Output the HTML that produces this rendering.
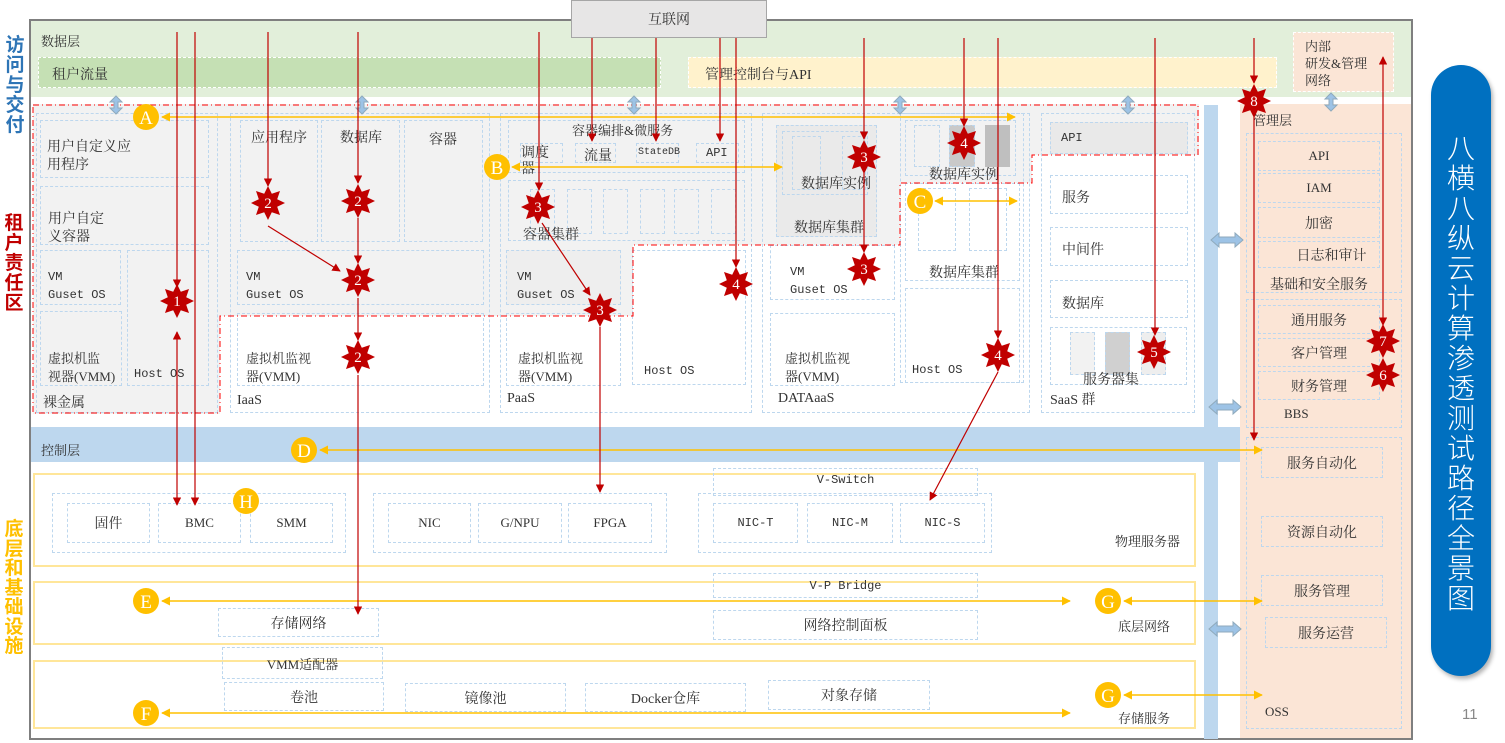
<!DOCTYPE html>
<html><head><meta charset="utf-8">
<style>
*{margin:0;padding:0;box-sizing:border-box}
body{width:1505px;height:743px;background:#fff;position:relative;overflow:hidden;font-family:"Liberation Serif","Noto Serif CJK SC",serif;color:#333;font-size:13px}
.a{position:absolute}
.b{position:absolute;border:1.5px dashed #bdd7ee}
.t{position:absolute;white-space:nowrap;font-size:13px;color:#333}
.m{font-family:"Liberation Mono","Noto Serif CJK SC",monospace;font-size:12px}
.c{display:flex;align-items:center;justify-content:center}
.side{position:absolute;font-size:19px;font-weight:bold;line-height:20px;width:22px;text-align:center;font-family:"Noto Sans CJK SC",sans-serif}
</style></head><body>
<!-- side labels -->
<div class="side" style="left:4px;top:34px;color:#2e75b6">访问与交付</div>
<div class="side" style="left:3px;top:212px;color:#c00000">租户责任区</div>
<div class="side" style="left:3px;top:518px;color:#ffc000;line-height:19.5px">底层和基础设施</div>

<!-- frame -->
<div class="a" style="left:29px;top:19px;width:1384px;height:721px;border:2px solid #7f7f7f;background:#fff"></div>
<div class="a" style="left:31px;top:21px;width:1380px;height:76px;background:#e2efda"></div>
<div class="t" style="left:41px;top:31px">数据层</div>
<div class="a" style="left:38px;top:57px;width:623px;height:31px;background:#c5e0b4;border:1.5px dashed #fff"></div>
<div class="t" style="left:52px;top:64px;font-size:14px">租户流量</div>
<div class="a" style="left:688px;top:57px;width:589px;height:31px;background:#fff2cc;border:1.5px dashed #fff"></div>
<div class="t" style="left:705px;top:64px;font-size:14px">管理控制台与API</div>
<div class="a" style="left:1293px;top:32px;width:101px;height:60px;background:#fbe5d6;border:1.5px dashed #fff"></div>
<div class="t" style="left:1305px;top:38px;line-height:17px">内部<br>研发&amp;管理<br>网络</div>
<div class="a c" style="left:571px;top:0;width:196px;height:38px;background:#e7e6e6;border:1.5px solid #a6a6a6;font-size:14px">互联网</div>

<!-- tenant region -->
<div class="a" style="left:33px;top:104px;width:1166px;height:310px;background:#f2f2f2"></div>
<div class="a" style="left:220px;top:316px;width:413px;height:98px;background:#fff"></div>
<div class="a" style="left:633px;top:245px;width:267px;height:169px;background:#fff"></div>
<div class="a" style="left:900px;top:183px;width:132px;height:231px;background:#fff"></div>
<div class="a" style="left:1032px;top:155px;width:167px;height:259px;background:#fff"></div>

<!-- 裸金属 -->
<div class="b" style="left:36px;top:113px;width:182px;height:300px"></div>
<div class="b" style="left:40px;top:120px;width:169px;height:58px"></div>
<div class="t" style="left:47px;top:139px;line-height:18px;font-size:14px">用户自定义应<br>用程序</div>
<div class="b" style="left:40px;top:186px;width:169px;height:59px"></div>
<div class="t" style="left:48px;top:211px;line-height:18px;font-size:14px">用户自定<br>义容器</div>
<div class="b" style="left:40px;top:250px;width:81px;height:55px"></div>
<div class="t m" style="left:48px;top:268px;line-height:18px">VM<br>Guset OS</div>
<div class="b" style="left:127px;top:250px;width:82px;height:136px"></div>
<div class="t m" style="left:134px;top:367px">Host OS</div>
<div class="b" style="left:40px;top:311px;width:82px;height:75px"></div>
<div class="t" style="left:48px;top:350px;line-height:18px">虚拟机监<br>视器(VMM)</div>
<div class="t" style="left:43px;top:392px;font-size:14px">裸金属</div>

<!-- IaaS -->
<div class="b" style="left:230px;top:113px;width:260px;height:300px"></div>
<div class="b" style="left:240px;top:120px;width:78px;height:122px"></div>
<div class="t" style="left:251px;top:127px;font-size:14px">应用程序</div>
<div class="b" style="left:321px;top:120px;width:79px;height:122px"></div>
<div class="t" style="left:340px;top:127px;font-size:14px">数据库</div>
<div class="b" style="left:404px;top:120px;width:79px;height:122px"></div>
<div class="t" style="left:429px;top:129px;font-size:14px">容器</div>
<div class="b" style="left:237px;top:250px;width:247px;height:55px"></div>
<div class="t m" style="left:246px;top:268px;line-height:18px">VM<br>Guset OS</div>
<div class="b" style="left:237px;top:313px;width:247px;height:73px"></div>
<div class="t" style="left:246px;top:350px;line-height:18px">虚拟机监视<br>器(VMM)</div>
<div class="t" style="left:237px;top:393px;font-size:14px">IaaS</div>

<!-- PaaS -->
<div class="b" style="left:500px;top:113px;width:252px;height:300px"></div>
<div class="b" style="left:508px;top:120px;width:237px;height:53px"></div>
<div class="t" style="left:572px;top:120px">容器编排&amp;微服务</div>
<div class="b" style="left:520px;top:143px;width:43px;height:20px"></div>
<div class="t" style="left:521px;top:146px;line-height:16px;font-size:14px">调度<br>器</div>
<div class="b" style="left:575px;top:143px;width:41px;height:20px"></div>
<div class="t" style="left:584px;top:145px;font-size:14px">流量</div>
<div class="b" style="left:636px;top:143px;width:43px;height:20px"></div>
<div class="t m" style="left:638px;top:147px;font-size:10px">StateDB</div>
<div class="b" style="left:696px;top:143px;width:43px;height:20px"></div>
<div class="t m" style="left:706px;top:146px">API</div>
<div class="b" style="left:508px;top:180px;width:237px;height:61px"></div>
<div class="b" style="left:530px;top:189px;width:25px;height:45px"></div>
<div class="b" style="left:567px;top:189px;width:25px;height:45px"></div>
<div class="b" style="left:603px;top:189px;width:25px;height:45px"></div>
<div class="b" style="left:640px;top:189px;width:25px;height:45px"></div>
<div class="b" style="left:674px;top:189px;width:25px;height:45px"></div>
<div class="b" style="left:711px;top:189px;width:25px;height:45px"></div>
<div class="t" style="left:523px;top:224px;font-size:14px">容器集群</div>
<div class="b" style="left:506px;top:250px;width:115px;height:55px;background:#eee"></div>
<div class="t m" style="left:517px;top:268px;line-height:18px">VM<br>Guset OS</div>
<div class="b" style="left:632px;top:250px;width:114px;height:135px"></div>
<div class="t m" style="left:644px;top:364px">Host OS</div>
<div class="b" style="left:506px;top:313px;width:115px;height:73px"></div>
<div class="t" style="left:518px;top:350px;line-height:18px">虚拟机监视<br>器(VMM)</div>
<div class="t" style="left:507px;top:391px;font-size:14px">PaaS</div>

<!-- DATAaaS -->
<div class="b" style="left:762px;top:113px;width:268px;height:300px"></div>
<div class="b" style="left:776px;top:125px;width:101px;height:112px;background:#eaeaea"></div>
<div class="b" style="left:782px;top:131px;width:86px;height:64px"></div>
<div class="b" style="left:792px;top:136px;width:29px;height:54px"></div>
<div class="b" style="left:842px;top:136px;width:24px;height:54px"></div>
<div class="t" style="left:801px;top:173px;font-size:14px">数据库实例</div>
<div class="t" style="left:794px;top:217px;font-size:14px">数据库集群</div>
<div class="b" style="left:770px;top:245px;width:125px;height:55px"></div>
<div class="t m" style="left:790px;top:263px;line-height:18px">VM<br>Guset OS</div>
<div class="b" style="left:770px;top:313px;width:125px;height:73px"></div>
<div class="t" style="left:785px;top:350px;line-height:18px">虚拟机监视<br>器(VMM)</div>
<div class="t" style="left:778px;top:391px;font-size:14px">DATAaaS</div>
<div class="b" style="left:900px;top:113px;width:124px;height:270px"></div>
<div class="b" style="left:905px;top:120px;width:111px;height:56px"></div>
<div class="b" style="left:914px;top:125px;width:26px;height:42px"></div>
<div class="a" style="left:949px;top:125px;width:26px;height:42px;background:#c9c9c9;border:1.5px dashed #bdd7ee"></div>
<div class="a" style="left:985px;top:125px;width:25px;height:42px;background:#bfbfbf"></div>
<div class="t" style="left:929px;top:164px;font-size:14px">数据库实例</div>
<div class="b" style="left:905px;top:183px;width:115px;height:98px"></div>
<div class="b" style="left:918px;top:188px;width:38px;height:63px"></div>
<div class="b" style="left:969px;top:188px;width:38px;height:63px"></div>
<div class="t" style="left:929px;top:262px;font-size:14px">数据库集群</div>
<div class="b" style="left:905px;top:288px;width:115px;height:95px"></div>
<div class="t m" style="left:912px;top:363px">Host OS</div>

<!-- SaaS -->
<div class="b" style="left:1041px;top:113px;width:154px;height:300px"></div>
<div class="b" style="left:1050px;top:122px;width:138px;height:32px;background:#e9e9e9"></div>
<div class="t m" style="left:1061px;top:131px">API</div>
<div class="b" style="left:1050px;top:175px;width:138px;height:39px"></div>
<div class="t" style="left:1062px;top:187px;font-size:14px">服务</div>
<div class="b" style="left:1050px;top:227px;width:138px;height:39px"></div>
<div class="t" style="left:1062px;top:239px;font-size:14px">中间件</div>
<div class="b" style="left:1050px;top:280px;width:138px;height:38px"></div>
<div class="t" style="left:1062px;top:293px;font-size:14px">数据库</div>
<div class="b" style="left:1050px;top:327px;width:137px;height:58px"></div>
<div class="b" style="left:1070px;top:332px;width:25px;height:43px;background:#f2f2f2"></div>
<div class="a" style="left:1105px;top:332px;width:25px;height:43px;background:#d0d0d0;border:1.5px dashed #bdd7ee"></div>
<div class="b" style="left:1141px;top:332px;width:25px;height:43px;background:#eee"></div>
<div class="t" style="left:1083px;top:369px;font-size:14px">服务器集</div>
<div class="t" style="left:1050px;top:389px;font-size:14px">SaaS 群</div>

<!-- blue bar and mgmt -->
<div class="a" style="left:1204px;top:105px;width:14px;height:634px;background:#bdd7ee"></div>
<div class="a" style="left:1240px;top:104px;width:171px;height:634px;background:#fbe5d6"></div>
<div class="t" style="left:1253px;top:110px">管理层</div>
<div class="b" style="left:1246px;top:133px;width:156px;height:160px"></div>
<div class="b c" style="left:1258px;top:141px;width:122px;height:30px">API</div>
<div class="b c" style="left:1258px;top:173px;width:122px;height:30px">IAM</div>
<div class="b c" style="left:1258px;top:207px;width:122px;height:31px;font-size:14px">加密</div>
<div class="b c" style="left:1258px;top:241px;width:122px;height:27px;font-size:14px;padding-left:25px">日志和审计</div>
<div class="t" style="left:1270px;top:274px;font-size:14px">基础和安全服务</div>
<div class="b" style="left:1246px;top:299px;width:156px;height:129px"></div>
<div class="b c" style="left:1258px;top:305px;width:122px;height:29px;font-size:14px">通用服务</div>
<div class="b c" style="left:1258px;top:338px;width:122px;height:29px;font-size:14px">客户管理</div>
<div class="b c" style="left:1258px;top:371px;width:122px;height:29px;font-size:14px">财务管理</div>
<div class="t" style="left:1284px;top:406px">BBS</div>
<div class="b" style="left:1246px;top:437px;width:156px;height:292px"></div>
<div class="b c" style="left:1261px;top:447px;width:122px;height:31px;font-size:14px">服务自动化</div>
<div class="b c" style="left:1261px;top:516px;width:122px;height:31px;font-size:14px">资源自动化</div>
<div class="b c" style="left:1261px;top:575px;width:122px;height:31px;font-size:14px">服务管理</div>
<div class="b c" style="left:1265px;top:617px;width:122px;height:31px;font-size:14px">服务运营</div>
<div class="t" style="left:1265px;top:704px">OSS</div>

<!-- control layer -->
<div class="a" style="left:31px;top:427px;width:1209px;height:35px;background:#bdd7ee"></div>
<div class="t" style="left:41px;top:440px">控制层</div>

<!-- physical -->
<div class="a" style="left:33px;top:473px;width:1163px;height:94px;border:2px solid #ffe699"></div>
<div class="b" style="left:52px;top:493px;width:294px;height:60px"></div>
<div class="b c" style="left:67px;top:503px;width:83px;height:40px;font-size:14px">固件</div>
<div class="b c" style="left:158px;top:503px;width:83px;height:40px">BMC</div>
<div class="b c" style="left:250px;top:503px;width:83px;height:40px">SMM</div>
<div class="b" style="left:373px;top:493px;width:294px;height:60px"></div>
<div class="b c" style="left:388px;top:503px;width:83px;height:40px">NIC</div>
<div class="b c" style="left:478px;top:503px;width:84px;height:40px">G/NPU</div>
<div class="b c" style="left:568px;top:503px;width:84px;height:40px">FPGA</div>
<div class="b c m" style="left:713px;top:468px;width:265px;height:28px;align-items:flex-start;padding-top:4px">V-Switch</div>
<div class="b" style="left:698px;top:493px;width:294px;height:60px"></div>
<div class="b c m" style="left:713px;top:503px;width:85px;height:40px">NIC-T</div>
<div class="b c m" style="left:807px;top:503px;width:86px;height:40px">NIC-M</div>
<div class="b c m" style="left:900px;top:503px;width:85px;height:40px">NIC-S</div>
<div class="t" style="left:1115px;top:531px">物理服务器</div>

<div class="a" style="left:33px;top:581px;width:1163px;height:64px;border:2px solid #ffe699"></div>
<div class="b c m" style="left:713px;top:573px;width:265px;height:25px">V-P Bridge</div>
<div class="b c" style="left:713px;top:610px;width:265px;height:30px;font-size:14px">网络控制面板</div>
<div class="b c" style="left:218px;top:608px;width:161px;height:29px;font-size:14px">存储网络</div>
<div class="t" style="left:1118px;top:616px">底层网络</div>

<div class="a" style="left:33px;top:660px;width:1163px;height:69px;border:2px solid #ffe699"></div>
<div class="b c" style="left:222px;top:647px;width:161px;height:32px">VMM适配器</div>
<div class="b c" style="left:224px;top:682px;width:160px;height:29px;font-size:14px">卷池</div>
<div class="b c" style="left:405px;top:683px;width:161px;height:29px;font-size:14px">镜像池</div>
<div class="b c" style="left:585px;top:683px;width:161px;height:29px;font-size:14px">Docker仓库</div>
<div class="b c" style="left:768px;top:680px;width:162px;height:30px;font-size:14px">对象存储</div>
<div class="t" style="left:1118px;top:708px">存储服务</div>

<!-- pill -->
<div class="a" style="left:1431px;top:65px;width:60px;height:611px;background:#0070c0;border-radius:30px;box-shadow:2px 3px 4px rgba(0,0,0,.3)"></div>
<div class="a" style="left:1431px;top:132px;width:60px;text-align:center;color:#fff;font-size:28px;line-height:30px;font-family:'Noto Sans CJK SC',sans-serif;font-weight:300">八<br>横<br>八<br>纵<br>云<br>计<br>算<br>渗<br>透<br>测<br>试<br>路<br>径<br>全<br>景<br>图</div>
<div class="t" style="left:1462px;top:706px;color:#888;font-family:'Liberation Sans',sans-serif;font-size:15px">11</div>

<svg class="a" style="left:0;top:0" width="1505" height="743" viewBox="0 0 1505 743">
<defs>
<marker id="r" viewBox="0 0 10 10" refX="9" refY="5" markerWidth="7" markerHeight="7" orient="auto-start-reverse"><path d="M0,0L10,5L0,10z" fill="#c00000"/></marker>
<marker id="o" viewBox="0 0 10 10" refX="9" refY="5" markerWidth="6" markerHeight="6" orient="auto-start-reverse"><path d="M0,0L10,5L0,10z" fill="#ffc000"/></marker>
</defs>
<path d="M33,105H1198V155H1032V183H900V245H633V316H220V413H33Z" fill="none" stroke="#ff0000" stroke-width="1" stroke-dasharray="6,3,1,3"/>
<g fill="#9dc3e6" stroke="#8faabc" stroke-width="1">
<path d="M116,96l-6,6h4v6h-4l6,6l6-6h-4v-6h4z"/>
<path d="M362,96l-6,6h4v6h-4l6,6l6-6h-4v-6h4z"/>
<path d="M634,96l-6,6h4v6h-4l6,6l6-6h-4v-6h4z"/>
<path d="M900,96l-6,6h4v6h-4l6,6l6-6h-4v-6h4z"/>
<path d="M1128,96l-6,6h4v6h-4l6,6l6-6h-4v-6h4z"/>
<path d="M1331,93l-6,6h4v6h-4l6,6l6-6h-4v-6h4z"/>
<path d="M1211,240l8,-7v4h16v-4l8,7l-8,7v-4h-16v4z"/>
<path d="M1209,407l8,-7v4h16v-4l8,7l-8,7v-4h-16v4z"/>
<path d="M1209,629l8,-7v4h16v-4l8,7l-8,7v-4h-16v4z"/>
</g>
<g stroke="#ffc000" stroke-width="1.5" fill="none">
<line x1="162" y1="117" x2="1015" y2="117" marker-start="url(#o)" marker-end="url(#o)"/>
<line x1="512" y1="167" x2="782" y2="167" marker-start="url(#o)" marker-end="url(#o)"/>
<line x1="935" y1="201" x2="1017" y2="201" marker-start="url(#o)" marker-end="url(#o)"/>
<line x1="320" y1="450" x2="1262" y2="450" marker-start="url(#o)" marker-end="url(#o)"/>
<line x1="162" y1="601" x2="1070" y2="601" marker-start="url(#o)" marker-end="url(#o)"/>
<line x1="162" y1="713" x2="1070" y2="713" marker-start="url(#o)" marker-end="url(#o)"/>
<line x1="1124" y1="601" x2="1262" y2="601" marker-start="url(#o)" marker-end="url(#o)"/>
<line x1="1124" y1="695" x2="1262" y2="695" marker-start="url(#o)" marker-end="url(#o)"/>
</g>
<g stroke="#c00000" stroke-width="1.2" fill="none" marker-end="url(#r)">
<line x1="177" y1="32" x2="177" y2="287"/>
<line x1="177" y1="505" x2="177" y2="332" marker-start="url(#r)"/>
<line x1="195" y1="32" x2="195" y2="505"/>
<line x1="268" y1="32" x2="268" y2="186"/>
<line x1="268" y1="226" x2="340" y2="271"/>
<line x1="358" y1="32" x2="358" y2="183"/>
<line x1="358" y1="218" x2="358" y2="263"/>
<line x1="358" y1="298" x2="358" y2="340"/>
<line x1="358" y1="375" x2="358" y2="614"/>
<line x1="539" y1="32" x2="539" y2="190"/>
<line x1="542" y1="223" x2="590" y2="295"/>
<line x1="600" y1="327" x2="600" y2="492"/>
<line x1="592" y1="38" x2="592" y2="141"/>
<line x1="656" y1="38" x2="656" y2="141"/>
<line x1="720" y1="38" x2="720" y2="141"/>
<line x1="736" y1="38" x2="736" y2="267"/>
<line x1="864" y1="38" x2="864" y2="139"/>
<line x1="864" y1="173" x2="864" y2="252"/>
<line x1="964" y1="38" x2="964" y2="126"/>
<line x1="998" y1="38" x2="998" y2="338"/>
<line x1="998" y1="372" x2="930" y2="500"/>
<line x1="1155" y1="38" x2="1155" y2="335"/>
<line x1="1254" y1="38" x2="1254" y2="83"/>
<line x1="1254" y1="117" x2="1254" y2="440"/>
<line x1="1383" y1="325" x2="1383" y2="57" marker-start="url(#r)"/>
</g>
<defs><polygon id="s" points="0,-17 3.8,-9.2 12,-12 9.2,-3.8 17,0 9.2,3.8 12,12 3.8,9.2 0,17 -3.8,9.2 -12,12 -9.2,3.8 -17,0 -9.2,-3.8 -12,-12 -3.8,-9.2" fill="#c00000"/></defs>
<g font-family="Liberation Serif,serif" font-size="15" fill="#fff" text-anchor="middle">
<use href="#s" x="177" y="301"/><text x="177" y="306">1</text>
<use href="#s" x="268" y="203"/><text x="268" y="208">2</text>
<use href="#s" x="358" y="201"/><text x="358" y="206">2</text>
<use href="#s" x="358" y="280"/><text x="358" y="285">2</text>
<use href="#s" x="358" y="357"/><text x="358" y="362">2</text>
<use href="#s" x="538" y="207"/><text x="538" y="212">3</text>
<use href="#s" x="864" y="157"/><text x="864" y="162">3</text>
<use href="#s" x="600" y="310"/><text x="600" y="315">3</text>
<use href="#s" x="864" y="269"/><text x="864" y="274">3</text>
<use href="#s" x="964" y="143"/><text x="964" y="148">4</text>
<use href="#s" x="736" y="284"/><text x="736" y="289">4</text>
<use href="#s" x="998" y="355"/><text x="998" y="360">4</text>
<use href="#s" x="1154" y="352"/><text x="1154" y="357">5</text>
<use href="#s" x="1383" y="375"/><text x="1383" y="380">6</text>
<use href="#s" x="1383" y="341"/><text x="1383" y="346">7</text>
<use href="#s" x="1254" y="101"/><text x="1254" y="106">8</text>
</g>
<g fill="#ffc000"><circle cx="146" cy="117" r="13"/><circle cx="497" cy="167" r="13"/><circle cx="920" cy="201" r="13"/><circle cx="304" cy="450" r="13"/><circle cx="146" cy="601" r="13"/><circle cx="146" cy="713" r="13"/><circle cx="1108" cy="601" r="13"/><circle cx="1108" cy="695" r="13"/><circle cx="246" cy="501" r="13"/></g>
<g font-family="Liberation Serif,serif" font-size="19" fill="#fff" text-anchor="middle">
<text x="146" y="124">A</text><text x="497" y="174">B</text><text x="920" y="208">C</text><text x="304" y="457">D</text><text x="146" y="608">E</text><text x="146" y="720">F</text><text x="1108" y="608">G</text><text x="1108" y="702">G</text><text x="246" y="508">H</text>
</g>
</svg>
</body></html>
